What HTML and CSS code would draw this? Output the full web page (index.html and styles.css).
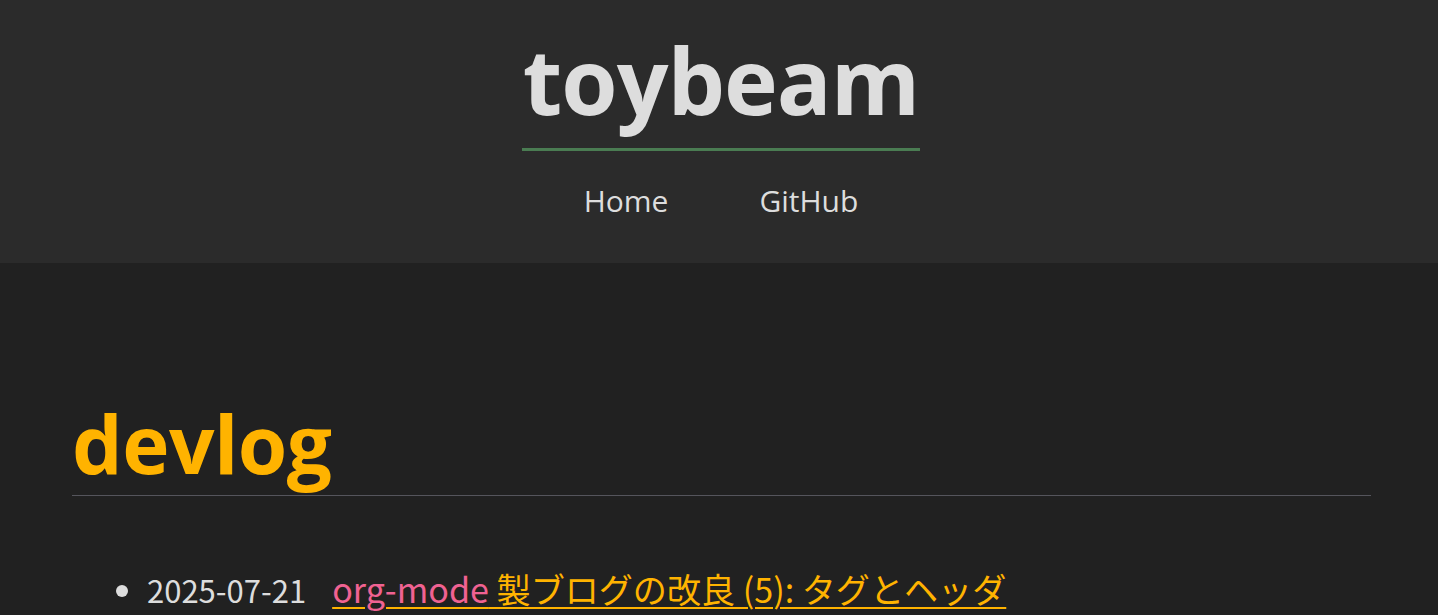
FILE: index.html
```html
<!DOCTYPE html>
<html lang="ja">
<head>
<meta charset="utf-8">
<title>devlog - toybeam</title>
<link rel="stylesheet" href="styles.css">
</head>
<body>
<header class="site-header">
  <h1 class="site-title"><a href="#">toybeam</a></h1>
  <nav class="site-nav">
    <a href="#">Home</a>
    <a href="#">GitHub</a>
  </nav>
</header>
<main class="content">
  <h1 class="page-title">devlog</h1>
  <ul class="post-list">
    <li><span class="date">2025-07-21</span><a class="post-link" href="#"><span class="code">org-mode</span> 製ブログの改良 (5): タグとヘッダ</a></li>
  </ul>
</main>
</body>
</html>
```

FILE: styles.css
```css
html, body {
  margin: 0;
  padding: 0;
}
body {
  background: #212121;
  color: #dddddd;
  font-family: "Open Sans", "Noto Sans CJK JP", sans-serif;
}
a {
  color: inherit;
  text-decoration: none;
}
.site-header {
  background: #2b2b2b;
  height: 263px;
  display: flex;
  flex-direction: column;
  align-items: center;
  box-sizing: border-box;
  padding: 20px 0 0 4px;
}
.site-title {
  margin: 0;
  font-size: 91px;
  font-weight: 700;
  line-height: 120px;
  letter-spacing: -1px;
  color: #dddddd;
  border-bottom: 3px solid #4a7c52;
  padding: 0 1px 8px 1px;
}
.site-nav {
  display: flex;
  gap: 91px;
  margin-top: 30px;
  font-size: 30px;
  line-height: 40px;
}
.site-nav a {
  color: #dddddd;
}
.content {
  padding: 0 67px 0 72px;
}
.page-title {
  margin: 130px 0 0;
  font-size: 80px;
  font-weight: 700;
  line-height: 100px;
  letter-spacing: -0.5px;
  color: #ffb300;
  border-bottom: 1px solid #55555c;
  padding-bottom: 2px;
}
.post-list {
  margin: 68px 0 0;
  padding-left: 75px;
  font-family: "Noto Sans CJK JP", sans-serif;
  font-size: 31px;
  line-height: 48px;
}
.post-list li::marker {
  color: #dddddd;
}
.date {
  color: #dddddd;
  margin-right: 26px;
}
.post-link {
  font-size: 1.1em;
  color: #ffb300;
  text-decoration: underline;
  text-decoration-thickness: 2px;
  text-underline-offset: 4px;
}
.code {
  color: #f06292;
}
```
